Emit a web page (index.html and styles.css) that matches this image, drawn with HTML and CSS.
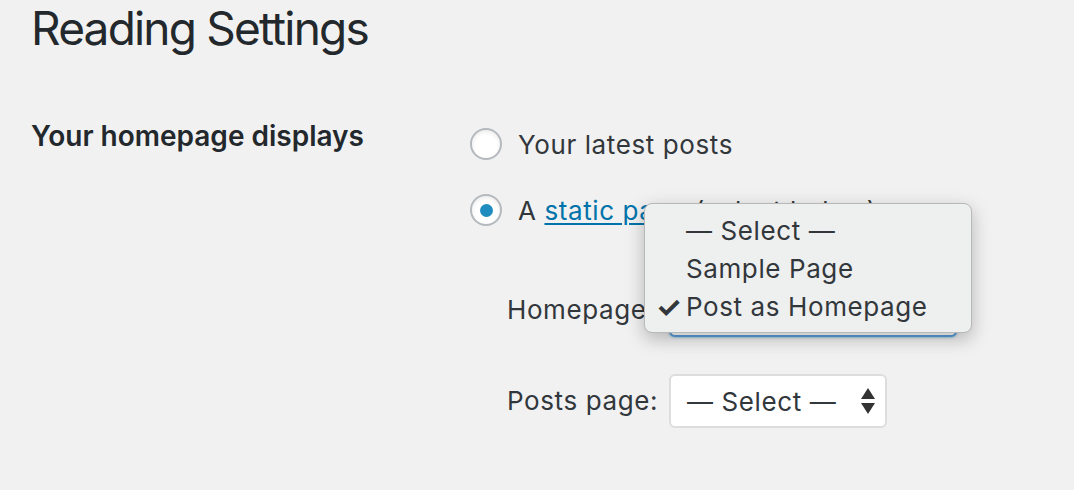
FILE: index.html
```html
<!DOCTYPE html>
<html lang="en">
<head>
<meta charset="utf-8">
<title>Reading Settings</title>
<link rel="stylesheet" href="styles.css">
</head>
<body>
<div class="wrap">
  <h1 class="title">Reading Settings</h1>
  <div class="form-row">
    <div class="row-label">Your homepage displays</div>
    <div class="row-field">
      <label class="radio-line">
        <span class="radio"></span>
        <span class="radio-text">Your latest posts</span>
      </label>
      <label class="radio-line">
        <span class="radio checked"><span class="dot"></span></span>
        <span class="radio-text">A <a class="link" href="#">static page</a> (select below)</span>
      </label>
      <div class="page-selects">
        <div class="select-row">
          <span class="select-label">Homepage:</span>
          <span class="select focused"><span class="select-value">Post as Homepage</span><span class="arrows"><span class="up"></span><span class="down"></span></span></span>
        </div>
        <div class="select-row">
          <span class="select-label">Posts page:</span>
          <span class="select"><span class="select-value">— Select —</span><span class="arrows"><span class="up"></span><span class="down"></span></span></span>
        </div>
      </div>
      <div class="menu">
        <div class="menu-item"><span class="check"></span>— Select —</div>
        <div class="menu-item"><span class="check"></span>Sample Page</div>
        <div class="menu-item"><span class="check">✓</span>Post as Homepage</div>
      </div>
    </div>
  </div>
</div>
</body>
</html>
```

FILE: styles.css
```css
html, body {
  margin: 0;
  padding: 0;
  background: #f1f1f1;
}
body {
  font-family: Inter, "Noto Sans", "Liberation Sans", sans-serif;
  color: #32373c;
  overflow: hidden;
  height: 490px;
}
.wrap {
  padding-left: 31px;
}
.title {
  margin: 5px 0 0 0;
  font-size: 46px;
  line-height: 46px;
  font-weight: 400;
  letter-spacing: -1.8px;
  color: #23282d;
}
.form-row {
  display: flex;
  margin-top: 65px;
}
.row-label {
  width: 439px;
  flex: none;
  font-size: 28px;
  line-height: 40px;
  font-weight: 600;
  color: #23282d;
}
.row-field {
  position: relative;
  padding-top: 9px;
  letter-spacing: 0.6px;
}
.radio-line {
  display: flex;
  align-items: center;
  height: 40px;
  margin-bottom: 26px;
  font-size: 26px;
}
.radio {
  box-sizing: border-box;
  width: 32px;
  height: 32px;
  border: 2px solid #b4b9be;
  border-radius: 50%;
  background: #fff;
  box-shadow: inset 0 2px 4px rgba(0,0,0,0.08);
  margin: -2px 16px 0 0;
  display: flex;
  align-items: center;
  justify-content: center;
  flex: none;
}
.dot {
  width: 13px;
  height: 13px;
  border-radius: 50%;
  background: #1e8cbe;
}
.radio-text {
  line-height: 40px;
}
.link {
  color: #0073aa;
  text-decoration: underline;
  text-underline-offset: 3px;
}
.page-selects {
  padding-left: 37px;
  padding-top: 26px;
}
.select-row {
  display: flex;
  align-items: center;
  height: 54px;
  margin-bottom: 37px;
  font-size: 26px;
}
.select-label {
  width: 162px;
  flex: none;
  line-height: 40px;
}
.select {
  box-sizing: border-box;
  display: flex;
  align-items: center;
  justify-content: space-between;
  height: 54px;
  width: 218px;
  padding: 0 10px 0 16px;
  background: #fff;
  border: 2px solid #dddddd;
  border-radius: 6px;
  color: #32373c;
}
.select.focused {
  width: 288px;
  border-color: #5b9dd9;
  box-shadow: 0 0 3px rgba(30,140,190,0.8);
}
.arrows {
  display: flex;
  flex-direction: column;
  gap: 4px;
}
.up {
  width: 0;
  height: 0;
  border-left: 7px solid transparent;
  border-right: 7px solid transparent;
  border-bottom: 11px solid #333;
}
.down {
  width: 0;
  height: 0;
  border-left: 7px solid transparent;
  border-right: 7px solid transparent;
  border-top: 11px solid #333;
}
.menu {
  position: absolute;
  left: 174px;
  top: 87px;
  box-sizing: border-box;
  width: 328px;
  height: 130px;
  padding-top: 8px;
  background: #eeefef;
  border: 1px solid #b8b8b8;
  border-radius: 8px;
  box-shadow: 0 6px 18px rgba(0,0,0,0.25);
  font-size: 26px;
  color: #32373c;
}
.menu-item {
  display: flex;
  height: 38px;
  line-height: 38px;
}
.check {
  width: 41px;
  flex: none;
  text-align: right;
  padding-right: 4px;
  box-sizing: border-box;
  font-size: 29px;
  font-weight: 700;
}
```
